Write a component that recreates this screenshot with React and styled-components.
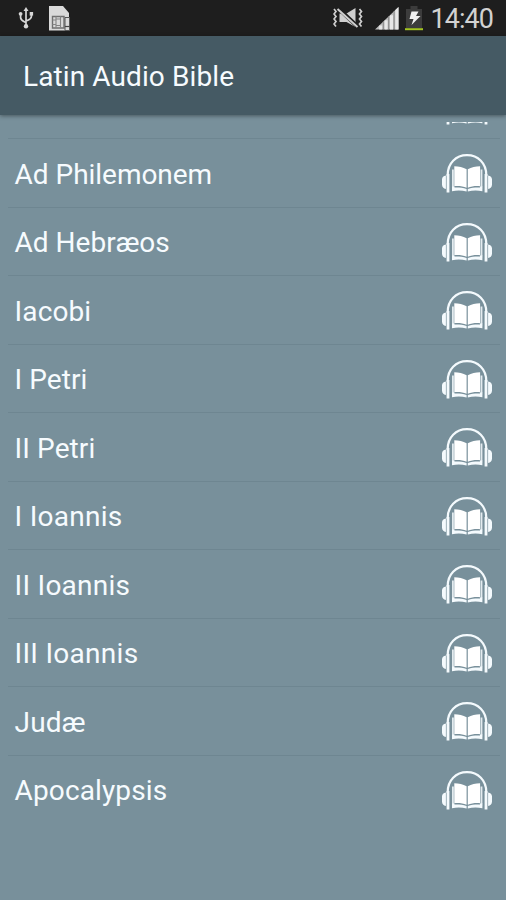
import styled, { createGlobalStyle } from "styled-components"

const EstiloGlobal = createGlobalStyle`
    body {
        margin: 0;
        background-color: #78909B;
        font-family: Roboto, "Liberation Sans", sans-serif;
    }
`

const Tela = styled.div`
    background-color: #78909B;
    display: flex;
    flex-direction: column;
    height: 900px;
    overflow: hidden;
    width: 506px;
`

const BarraStatus = styled.div`
    align-items: center;
    background-color: #1E1E1E;
    box-sizing: border-box;
    display: flex;
    flex-shrink: 0;
    height: 36px;
    justify-content: space-between;
    padding: 0 13px 0 18px;
`

const GrupoIcones = styled.div`
    align-items: center;
    display: flex;
    gap: ${props => props.$espaco};
`

const Relogio = styled.span`
    color: #D2D2D2;
    font-size: 27px;
    letter-spacing: -0.95px;
    line-height: 36px;
    margin-left: 2px;
    padding-top: 1px;
`

const Cabecalho = styled.header`
    align-items: center;
    background-color: #455A64;
    box-shadow: 0 1px 4px rgba(0, 0, 0, 0.4);
    box-sizing: border-box;
    display: flex;
    flex-shrink: 0;
    height: 79px;
    padding: 2px 0 0 23px;
`

const Titulo = styled.h1`
    color: #F6FBFE;
    font-size: 28px;
    font-weight: 400;
    letter-spacing: 0.1px;
    margin: 0;
`

const Lista = styled.ul`
    display: flex;
    flex: 1;
    flex-direction: column;
    justify-content: flex-end;
    list-style: none;
    margin: 7px 6px 0 8px;
    overflow: hidden;
    padding: 0 0 76px;
`

const Item = styled.li`
    align-items: center;
    border-bottom: 1px solid ${props => props.$ultimo ? "transparent" : "#6E8691"};
    box-sizing: border-box;
    display: flex;
    flex-shrink: 0;
    height: 68.5px;
    justify-content: space-between;
    padding: 2px 8.5px 0 6.6px;
`

const NomeLivro = styled.span`
    color: #F6FBFE;
    font-size: 28px;
    letter-spacing: ${props => props.$espaco}px;
    line-height: 36px;
    padding-top: 2px;
`

const livros = [
    { nome: "", espaco: 0 },
    { nome: "Ad Philemonem", espaco: -0.03 },
    { nome: "Ad Hebræos", espaco: 0 },
    { nome: "Iacobi", espaco: 0.1 },
    { nome: "I Petri", espaco: 0.05 },
    { nome: "II Petri", espaco: 0.1 },
    { nome: "I Ioannis", espaco: 0.25 },
    { nome: "II Ioannis", espaco: 0.25 },
    { nome: "III Ioannis", espaco: 0.27 },
    { nome: "Judæ", espaco: 0.15 },
    { nome: "Apocalypsis", espaco: 0.12 },
]

function IconeUsb () {
    return (
        <svg width="16" height="22" viewBox="0 0 16 22" fill="none" stroke="#D6D6D6" strokeWidth="1.7">
            <path d="M8 3v16M8 15.5c-3-1.6-5.4-2-5.4-5V7M8 14c3-1.4 5.4-2 5.4-4.6V7" />
            <path d="M8 0L10.5 4h-5z" fill="#D6D6D6" stroke="none" />
            <circle cx="8" cy="19.2" r="2.2" fill="#D6D6D6" stroke="none" />
            <circle cx="2.6" cy="6.8" r="1.9" fill="#D6D6D6" stroke="none" />
            <path d="M11.7 5h3.4v3.6h-3.4z" fill="#D6D6D6" stroke="none" />
        </svg>
    )
}

function IconeSim () {
    return (
        <svg width="23" height="25" viewBox="0 0 23 25">
            <path d="M1 0h14l6 7v17.500H1z" fill="#DADADA" />
            <path d="M4.500 10.500h11.500v11.500h-11.500z" fill="none" stroke="#707070" strokeWidth="1.400" />
            <path d="M8 10.500v11.500M12.500 10.500v11.500M4.500 14H8M4.500 18.500H8M8 13h5M8 19.500h5" fill="none" stroke="#858585" strokeWidth="1.100" />
            <path d="M17 11.500h4.500v13h-4.500z" fill="#DADADA" stroke="#555" strokeWidth="1" />
            <path d="M17 20.500h4.500" stroke="#444" strokeWidth="1.200" />
        </svg>
    )
}

function IconeMudo () {
    return (
        <svg width="30" height="20" viewBox="0 0 30 20" fill="none" stroke="#CFCFCF">
            <path d="M6.500 5.500h7L22.500 0v19L13.500 14h-7z" fill="#CFCFCF" stroke="none" />
            <path d="M5 0l20.500 19.500" stroke="#1E1E1E" strokeWidth="4" />
            <path d="M4.500 1L24.500 19" strokeWidth="2" />
            <path d="M1 1l2 2.500L1 6l2 2.500L1 11l2 2.500L1 16l2 2.500M26.500 1l2 2.500-2 2.500 2 2.500-2 2.500 2 2.500-2 2.500 2 2.500" strokeWidth="1.700" />
        </svg>
    )
}

function IconeSinal () {
    return (
        <svg width="24" height="23" viewBox="0 0 24 23">
            <path d="M0 22.500L23.500 0v22.500z" fill="#BDBDBD" />
            <path d="M4.200 18.500h3v4h-3zM9.600 13.300h3v9.200h-3zM15 8.200h3v14.300h-3zM20.300 3L23.500 0v22.500h-3.200z" fill="#E8E8E8" />
            <path d="M8.300 14.500v8M13.700 9.300v13.200M19.100 4.200v18.300" stroke="#888" strokeWidth="1" />
        </svg>
    )
}

function IconeBateria () {
    return (
        <svg width="18" height="25" viewBox="0 0 18 25">
            <path d="M5.500 0h7v3H17v19H1V3h4.500z" fill="#3C3C3C" />
            <path d="M6.500 5.500h7l-2.500 4.500h4.500L6.500 19l2-6H4.500z" fill="#F0F0F0" />
            <path d="M0 22.200h18v2H0z" fill="#A4C523" />
        </svg>
    )
}

function IconeAudioLivro () {
    return (
        <svg width="50" height="39" viewBox="0 0 50 39">
            <path d="M5.700 22V21C5.700 9.300 13.800 1.200 25 1.200S44.300 9.300 44.300 21v1" fill="none" stroke="#F4FAFD" strokeWidth="2.200" />
            <path d="M6 20v18.500M44 20v18.500" fill="none" stroke="#F4FAFD" strokeWidth="2.800" />
            <path d="M3.900 21.500v13.500C1.500 34.500 0 33 0 30.500v-5C0 23.200 1.500 21.900 3.900 21.500zM46.100 21.500v13.500c2.400-.5 3.900-2 3.900-4.500v-5c0-2.300-1.500-3.600-3.900-4z" fill="#F4FAFD" />
            <path d="M10 15.500h1.800v17.600h-1.800zM38.600 15.500h1.800v17.600h-1.800z" fill="#E3EBEF" />
            <path d="M10 33.800c5-.6 10-.2 14.600 1.200v2.600c-4.600-1.200-9.600-1.300-14.600-.3zM40.400 33.800c-5-.6-10-.2-14.600 1.200v2.600c4.600-1.200 9.600-1.300 14.600-.3z" fill="#F4FAFD" />
            <path d="M12.300 12.300c4.500.2 8.700 1.100 12.300 3v18.500c-3.600-1.400-7.500-2-12.300-1.600zM38.100 12.300c-4.500.2-8.700 1.100-12.300 3v18.500c3.600-1.400 7.500-2 12.300-1.600z" fill="#FFF" />
            <path d="M10 32.500h2.500v1.800H10zM38 32.500h2.400v1.800H38z" fill="#F4FAFD" />
        </svg>
    )
}

function ItemLivro ({ nome, espaco, ultimo }) {
    return (
        <Item $ultimo={ultimo}>
            <NomeLivro $espaco={espaco}>{nome}</NomeLivro>
            <IconeAudioLivro />
        </Item>
    )
}

function App () {
    return (
        <>
            <EstiloGlobal />
            <Tela>
                <BarraStatus>
                    <GrupoIcones $espaco="14px">
                        <IconeUsb />
                        <IconeSim />
                    </GrupoIcones>
                    <GrupoIcones $espaco="12px">
                        <IconeMudo />
                        <GrupoIcones $espaco="6px">
                            <IconeSinal />
                            <IconeBateria />
                            <Relogio>14:40</Relogio>
                        </GrupoIcones>
                    </GrupoIcones>
                </BarraStatus>
                <Cabecalho>
                    <Titulo>Latin Audio Bible</Titulo>
                </Cabecalho>
                <Lista>
                    {livros.map((livro, indice) => (
                        <ItemLivro
                            key={indice}
                            nome={livro.nome}
                            espaco={livro.espaco}
                            ultimo={indice === livros.length - 1}
                        />
                    ))}
                </Lista>
            </Tela>
        </>
    )
}

export default App
